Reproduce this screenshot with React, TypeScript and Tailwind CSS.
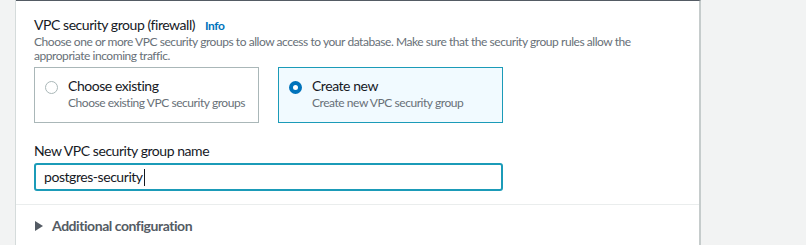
export default function App() {
  return (
    <div
      className="flex h-[245px] w-[806px] overflow-hidden bg-[#f2f3f3] tracking-[-0.028em] text-[#16191f]"
      style={{ fontFamily: 'Lato, "Noto Sans", sans-serif' }}
    >
      {/* left gutter */}
      <div className="w-[16px] shrink-0 border-r border-[#d5dbdb]" />

      {/* main panel */}
      <div className="flex w-[685px] shrink-0 flex-col border-t border-r-2 border-t-[#545b64] border-r-[#c6cccc] bg-white">
        <div className="px-[18px] pt-[14px]">
          {/* heading */}
          <div className="flex items-baseline gap-[10px]">
            <span className="text-[14px] leading-[20px]">VPC security group (firewall)</span>
            <span className="text-[12px] font-bold text-[#0073bb]">Info</span>
          </div>
          <p className="text-[12px] leading-[14px] text-[#687078]">
            Choose one or more VPC security groups to allow access to your database. Make sure that the security group rules allow the
            <br />
            appropriate incoming traffic.
          </p>

          {/* radio tiles */}
          <div className="mt-[4px] flex gap-[19px]">
            <RadioTile
              title="Choose existing"
              description="Choose existing VPC security groups"
              selected={false}
            />
            <RadioTile
              title="Create new"
              description="Create new VPC security group"
              selected
            />
          </div>

          {/* name field */}
          <div className="mt-[18px] text-[14px] leading-[20px]">New VPC security group name</div>
          <div className="mt-[2px] flex h-[28px] w-[469px] items-center rounded-[3px] border-2 border-[#1b9bb8] px-[8px]">
            <span className="text-[14px] leading-[20px]">postgres-security</span>
            <span className="ml-px h-[17px] w-px bg-[#16191f]" />
          </div>
        </div>

        {/* divider + expandable */}
        <div className="mt-[13px] border-t border-[#eaeded] px-[19px] pt-[10px]">
          <div className="flex items-center gap-[9px] text-[14px] font-bold text-[#545b64]">
            <svg width="8" height="10" viewBox="0 0 8 10">
              <path d="M0 0 L8 5 L0 10 Z" fill="#545b64" />
            </svg>
            <span>Additional configuration</span>
          </div>
        </div>
      </div>

      <div className="flex-1" />
    </div>
  );
}

function RadioTile({
  title,
  description,
  selected,
}: {
  title: string;
  description: string;
  selected: boolean;
}) {
  return (
    <div
      className={
        selected
          ? "flex h-[56px] w-[225px] gap-[10px] border border-[#1b9bb8] bg-[#f1faff] px-[10px] pt-[9px]"
          : "flex h-[56px] w-[225px] gap-[10px] border border-[#aab7b8] bg-white px-[10px] pt-[9px]"
      }
    >
      <div className="pt-[4px]">
        {selected ? (
          <div className="h-[13px] w-[13px] rounded-full border-[4px] border-[#0073bb] bg-white" />
        ) : (
          <div className="h-[13px] w-[13px] rounded-full border border-[#aab7b8] bg-white" />
        )}
      </div>
      <div className="flex flex-col">
        <span className="text-[14px] leading-[18px]">{title}</span>
        <span className="whitespace-nowrap text-[12px] leading-[16px] text-[#687078]">{description}</span>
      </div>
    </div>
  );
}
